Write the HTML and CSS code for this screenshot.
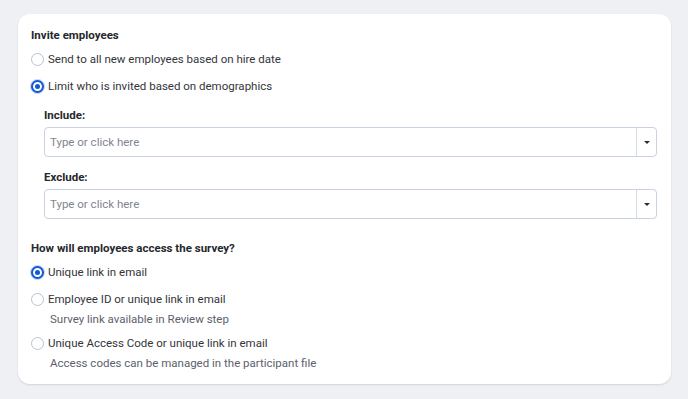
FILE: index.html
```html
<!DOCTYPE html>
<html lang="en">
<head>
    <meta charset="UTF-8">
    <title>Invite employees</title>
    <link rel="stylesheet" href="styles.css">
</head>
<body>
    <div class="card">
        <h3 class="section-title">Invite employees</h3>

        <label class="radio-row">
            <span class="radio"></span>
            Send to all new employees based on hire date
        </label>
        <label class="radio-row">
            <span class="radio checked"></span>
            Limit who is invited based on demographics
        </label>

        <div class="filters">
            <div class="field">
                <div class="field-label">Include:</div>
                <div class="select">
                    <span class="placeholder">Type or click here</span>
                    <span class="select-toggle"><span class="caret"></span></span>
                </div>
            </div>
            <div class="field">
                <div class="field-label">Exclude:</div>
                <div class="select">
                    <span class="placeholder">Type or click here</span>
                    <span class="select-toggle"><span class="caret"></span></span>
                </div>
            </div>
        </div>

        <h3 class="section-title second">How will employees access the survey?</h3>

        <label class="radio-row">
            <span class="radio checked"></span>
            Unique link in email
        </label>
        <label class="radio-row">
            <span class="radio"></span>
            Employee ID or unique link in email
        </label>
        <div class="hint">Survey link available in Review step</div>
        <label class="radio-row">
            <span class="radio"></span>
            Unique Access Code or unique link in email
        </label>
        <div class="hint">Access codes can be managed in the participant file</div>
    </div>
</body>
</html>
```

FILE: styles.css
```css
* {
    margin: 0;
    padding: 0;
    box-sizing: border-box;
}

body {
    font-family: Roboto, "Noto Sans", sans-serif;
    font-size: 11.5px;
    color: #2b2d33;
    background: #eff0f4;
    padding: 14px 17px 0 18px;
    height: 399px;
    overflow: hidden;
}

.card {
    background: #ffffff;
    border-radius: 12px;
    box-shadow: 0 1px 2px rgba(0, 0, 0, 0.12);
    padding: 13px 14px 17px 13px;
    height: 370px;
}

.section-title,
.field-label {
    font-size: 11.5px;
    font-weight: 700;
    color: #26282d;
    line-height: 16px;
}

.section-title {
    margin-bottom: 5px;
}

.section-title.second {
    margin-top: 21px;
    margin-bottom: 5px;
}

.radio-row {
    display: flex;
    align-items: center;
    gap: 4px;
    line-height: 16px;
    padding: 3px 0;
    margin-bottom: 5px;
    color: #33353b;
}

.radio {
    width: 13px;
    height: 13px;
    border-radius: 50%;
    border: 1px solid #b8c2d2;
    background: #ffffff;
    flex-shrink: 0;
}

.radio.checked {
    border: 2px solid #1257d6;
    background: #ffffff;
    position: relative;
    box-shadow: 0 0 0 1px rgba(18, 87, 214, 0.25);
}

.radio.checked::after {
    content: '';
    position: absolute;
    left: 2px;
    top: 2px;
    width: 5px;
    height: 5px;
    border-radius: 50%;
    background: #1257d6;
}

.filters {
    padding-left: 13px;
    margin-top: 10px;
}

.field {
    margin-bottom: 12px;
}

.field-label {
    margin-bottom: 4px;
}

.select {
    display: flex;
    align-items: stretch;
    height: 30px;
    border: 1px solid #c9d2e0;
    border-radius: 4px;
    background: #ffffff;
}

.placeholder {
    flex: 1;
    display: flex;
    align-items: center;
    padding-left: 5px;
    color: #7f8591;
}

.select-toggle {
    width: 20px;
    border-left: 1px solid #d7dce4;
    display: flex;
    align-items: center;
    justify-content: center;
}

.caret {
    width: 0;
    height: 0;
    border-left: 3px solid transparent;
    border-right: 3px solid transparent;
    border-top: 3px solid #2b2d33;
}

.hint {
    color: #5c616d;
    padding-left: 19px;
    line-height: 16px;
    margin-top: -4px;
    margin-bottom: 5px;
}
```
